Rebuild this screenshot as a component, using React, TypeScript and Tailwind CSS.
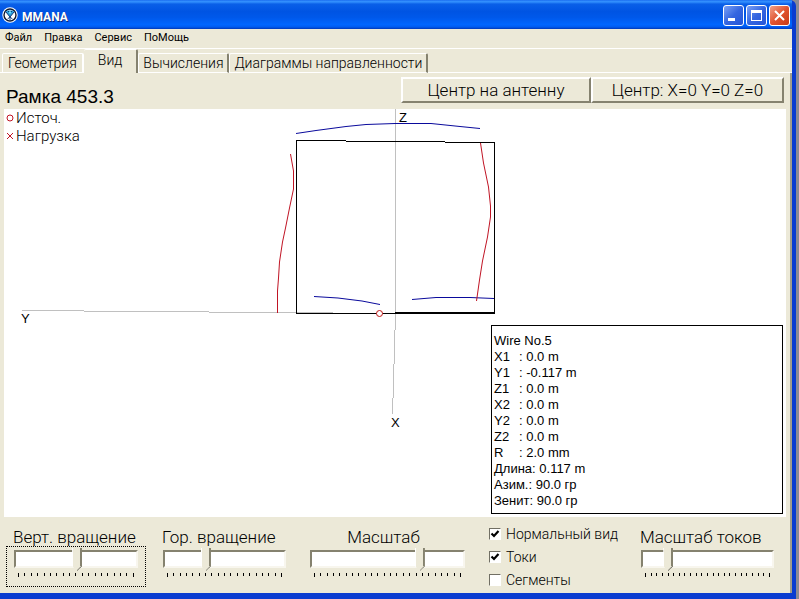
import type { ReactNode } from "react";

const wireInfo: [string, string][] = [
  ["X1", "0.0 m"],
  ["Y1", "-0.117 m"],
  ["Z1", "0.0 m"],
  ["X2", "0.0 m"],
  ["Y2", "0.0 m"],
  ["Z2", "0.0 m"],
  ["R", "2.0 mm"],
];

function TitleButton({ label, tone, children }: { label: string; tone: string; children: ReactNode }) {
  return (
    <button
      type="button"
      aria-label={label}
      className={`flex size-[21px] items-center justify-center rounded-[3px] border border-white bg-gradient-to-br ${tone}`}
    >
      <svg viewBox="0 0 19 19" className="size-[19px]" fill="none" stroke="white" shapeRendering="crispEdges">
        {children}
      </svg>
    </button>
  );
}

function TitleBar() {
  return (
    <header className="flex h-[29px] items-center gap-1 bg-[linear-gradient(to_bottom,#1c6ef0_0%,#3593ff_6%,#0a5fe8_14%,#0054e3_40%,#0058ea_60%,#0066ff_85%,#005bf0_93%,#0038b8_100%)] pr-0.5 pl-0.5">
      <svg viewBox="0 0 16 16" className="size-4" aria-hidden="true">
        <circle cx="8" cy="8" r="7.7" fill="#fff" />
        <circle cx="8" cy="8" r="6" fill="#fff" stroke="#101830" strokeWidth="1.4" />
        <path d="M3.5 4.5 6 3.4h4l2.500 1.100L8 10z" fill="#2b9fdc" />
        <path d="M4 5l4 5 4-5M8 9.500v3.500M5.500 12l2.500-2 2.500 2M6 4l2 2 2-2" fill="none" stroke="#123a78" strokeWidth="1" />
        <circle cx="8" cy="5.500" r="1" fill="#7ef0ff" />
      </svg>
      <h1 className="flex-1 pt-1 text-xs leading-4 font-bold text-white [text-shadow:1px_1px_0_#0a2a80]">
        MMANA
      </h1>
      <div className="flex gap-[2px] pt-0.5">
        <TitleButton label="Minimize" tone="from-[#7ba0f5] via-[#3566e0] to-[#2354d8]">
          <path d="M4 13.500h7" strokeWidth="3" />
        </TitleButton>
        <TitleButton label="Maximize" tone="from-[#7ba0f5] via-[#3566e0] to-[#2354d8]">
          <path d="M4.500 6v8.500h10V6" strokeWidth="1" />
          <path d="M4 5.500h11" strokeWidth="3" />
        </TitleButton>
        <TitleButton label="Close" tone="from-[#f0a088] via-[#e0532f] to-[#c83a15]">
          <path d="M5 5l9 9M14 5l-9 9" strokeWidth="2" shapeRendering="auto" />
        </TitleButton>
      </div>
    </header>
  );
}

function Tab({ children, active }: { children: string; active?: boolean }) {
  return (
    <button
      type="button"
      role="tab"
      aria-selected={!!active}
      className={
        active
          ? "h-6 rounded-t-[2px] border-t border-r-2 border-t-white border-r-[#85826f] bg-[#ece9d8] px-[14px] pb-1"
          : "h-5 rounded-t-[2px] border-t border-r-2 border-b border-l border-white border-r-[#85826f] px-1 first:border-r-white first:px-[5px]"
      }
    >
      {children}
    </button>
  );
}

function PushButton({ children, width }: { children: string; width: string }) {
  return (
    <button
      type="button"
      className={`h-[26px] border-t-2 border-r-2 border-b-2 border-l-2 border-t-white border-r-[#85826f] border-b-[#85826f] border-l-white text-[17px] leading-5 ${width}`}
    >
      {children}
    </button>
  );
}

function AntennaView() {
  return (
    <section className="relative mr-1 ml-1 min-h-[408px] flex-1 bg-white">
      <svg
        viewBox="4 109 782 408"
        preserveAspectRatio="xMinYMin meet"
        className="absolute inset-0 size-full font-['Liberation_Sans',sans-serif] font-normal"
        fill="none"
        role="img"
        aria-label="Antenna wires and currents"
      >
        <g stroke="#c0c0c0" shapeRendering="crispEdges">
          <path d="M395.500 109V313" />
          <path d="M395.500 313V330M394.500 330V364M393.500 364V398M392.500 398V414" />
          <path d="M22 310.500H84M84 311.500H209M209 312.500H333" />
        </g>
        <g stroke="#000" shapeRendering="crispEdges">
          <path d="M296.500 314V140.500H346M346 141.500H445M445 142.500H494.500V314" />
          <path d="M296 313.500H495" />
          <path d="M395 313H495" strokeWidth="2" />
        </g>
        <g stroke="#0a0a9c">
          <path d="M296 133.500 316 130.500 346 126.500 366 124.500 395 123.500H431L460 126.500 480 128.500" />
          <path d="M314 296.500 338 298 362 301 380 304.500" />
          <path d="M412 299.500 436 297.500H470L494 298.500" />
        </g>
        <g stroke="#c01424">
          <path d="M290.500 154 293.500 171V189L289.500 208 285.500 228 282.500 242 279.500 262 278.500 278 277.500 291V313" />
          <path d="M480.500 143 483.500 163 488.500 187 490.500 206V217L487.500 237 482.500 261 479.500 280 476.500 301" />
        </g>
        <circle cx="379.500" cy="313.500" r="3" fill="#fff" stroke="#c01414" />
        <g fill="#000">
          <text x="399" y="122" fontSize="13">Z</text>
          <text x="21" y="323" fontSize="13">Y</text>
          <text x="391" y="427" fontSize="13">X</text>
        </g>
      </svg>
      <ul className="relative w-max pl-[2px] text-[15px] leading-[18px]">
        <li className="flex items-center gap-[2px]">
          <svg viewBox="0 0 8 8" className="size-2" fill="none" stroke="#c01424" aria-hidden="true">
            <circle cx="4" cy="4" r="3" />
          </svg>
          Источ.
        </li>
        <li className="flex items-center gap-[2px]">
          <svg viewBox="0 0 8 8" className="size-2" stroke="#c01424" aria-hidden="true">
            <path d="M1 1l6 6M7 1l-6 6" />
          </svg>
          Нагрузка
        </li>
      </ul>
      <div className="absolute right-[3px] bottom-[3px] w-[292px] border border-black bg-white px-[2px] pt-[7px] pb-1 font-['Liberation_Sans',sans-serif] text-[13px] leading-4 font-normal">
        <p>Wire No.5</p>
        <dl>
          {wireInfo.map(([name, value]) => (
            <div key={name} className="flex">
              <dt className="w-[25px]">{name}</dt>
              <dd>: {value}</dd>
            </div>
          ))}
        </dl>
        <p>Длина: 0.117 m</p>
        <p>Азим.: 90.0 гр</p>
        <p>Зенит: 90.0 гр</p>
      </div>
    </section>
  );
}

function TrackBar({ id, label, value, ticks, focused, centered, className }: { id: string; label: string; value: number; ticks: number; focused?: boolean; centered?: boolean; className: string }) {
  return (
    <div className={className}>
      <label htmlFor={id} className={`block text-[17px] leading-[18px] whitespace-nowrap ${centered ? "pr-2 text-center" : "pl-[7px]"}`}>
        {label}
      </label>
      <div className={`flex h-[41px] flex-col border border-dotted px-[7px] pt-[3px] ${focused ? "border-black" : "border-transparent"}`}>
        <input
          id={id}
          type="range"
          min={0}
          max={100}
          defaultValue={value}
          className="m-0 block h-[18px] w-full appearance-none bg-transparent outline-none [&::-webkit-slider-runnable-track]:h-[18px] [&::-webkit-slider-runnable-track]:border-2 [&::-webkit-slider-runnable-track]:border-t-[#85826f] [&::-webkit-slider-runnable-track]:border-r-[#f8f6ee] [&::-webkit-slider-runnable-track]:border-b-[#f8f6ee] [&::-webkit-slider-runnable-track]:border-l-[#85826f] [&::-webkit-slider-runnable-track]:bg-white [&::-webkit-slider-thumb]:-mt-1 [&::-webkit-slider-thumb]:h-[23px] [&::-webkit-slider-thumb]:w-[10px] [&::-webkit-slider-thumb]:appearance-none [&::-webkit-slider-thumb]:bg-[linear-gradient(135deg,#ece9d8_35%,#716f64_50%),linear-gradient(to_right,#fff_1px,#ece9d8_1px,#ece9d8_8px,#85826f_8px)] [&::-webkit-slider-thumb]:bg-[length:5px_5px,100%_100%] [&::-webkit-slider-thumb]:bg-[position:100%_100%,0_0] [&::-webkit-slider-thumb]:bg-no-repeat [&::-webkit-slider-thumb]:[clip-path:polygon(0_0,100%_0,100%_18px,5px_100%,0_18px)]"
        />
        <div className="mt-[5px] flex h-[5px] justify-between px-1" aria-hidden="true">
          {Array.from({ length: ticks }, (_, i) => (
            <span key={i} className="h-[3px] w-px bg-black first:h-1 last:h-1" />
          ))}
        </div>
      </div>
    </div>
  );
}

function Check({ label, checked }: { label: string; checked?: boolean }) {
  return (
    <label className="flex h-[23px] items-center gap-[5px] text-sm leading-5 whitespace-nowrap">
      <span className="grid size-3">
        <input
          type="checkbox"
          defaultChecked={checked}
          className="peer col-start-1 row-start-1 m-0 size-3 appearance-none border border-t-[#716f64] border-r-white border-b-white border-l-[#716f64] bg-white"
        />
        <svg viewBox="0 0 12 12" className="pointer-events-none invisible col-start-1 row-start-1 size-3 peer-checked:visible" fill="none" stroke="#000" strokeWidth="2.200" aria-hidden="true">
          <path d="M2.500 5.500 5 8l4.500-5" />
        </svg>
      </span>
      {label}
    </label>
  );
}

export default function App() {
  return (
    <div className="flex min-h-screen flex-col bg-[#8b8b94] pr-[3px] font-['Roboto','Liberation_Sans',sans-serif] font-light text-black">
      <main className="flex flex-1 flex-col rounded-tr-md border-r-4 border-b-[6px] border-[#0a3cd0] bg-[#ece9d8]">
        <TitleBar />
        <nav className="flex h-5 items-center gap-3 border-b border-white pl-[5px] text-[11px] font-normal">
          {["Файл", "Правка", "Сервис", "ПоМощь"].map((item) => (
            <button key={item} type="button">
              {item}
            </button>
          ))}
        </nav>
        <div role="tablist" className="flex h-6 items-end pl-0.5 text-sm leading-[18px] shadow-[inset_0_-1px_0_#fff]">
          <Tab>Геометрия</Tab>
          <Tab active>Вид</Tab>
          <Tab>Вычисления</Tab>
          <Tab>Диаграммы направленности</Tab>
        </div>
        <div className="flex flex-1 flex-col border-r-2 border-[#a09d8c]">
          <div className="flex h-9 items-start justify-between pr-1.5 pl-1.5">
            <h2 className="pt-3 font-['Liberation_Sans',sans-serif] text-[19px] leading-6 font-normal">Рамка 453.3</h2>
            <div className="flex pt-1">
              <PushButton width="w-[190px]">Центр на антенну</PushButton>
              <PushButton width="w-[193px]">Центр: X=0 Y=0 Z=0</PushButton>
            </div>
          </div>
          <AntennaView />
          <footer className="grid grid-cols-[149fr_147fr_187fr_144fr_157fr] pt-[11px] pb-0.5 pl-1.5">
            <TrackBar id="vert" label="Верт. вращение" value={51} ticks={19} focused className="mr-[9px]" />
            <TrackBar id="horiz" label="Гор. вращение" value={33} ticks={19} className="mr-2" />
            <TrackBar id="scale" label="Масштаб" value={73} ticks={24} centered className="mr-4" />
            <fieldset className="-mt-1.5">
              <Check label="Нормальный вид" checked />
              <Check label="Токи" checked />
              <Check label="Сегменты" />
            </fieldset>
            <TrackBar id="current" label="Масштаб токов" value={17} ticks={23} className="mr-2" />
          </footer>
        </div>
      </main>
    </div>
  );
}
